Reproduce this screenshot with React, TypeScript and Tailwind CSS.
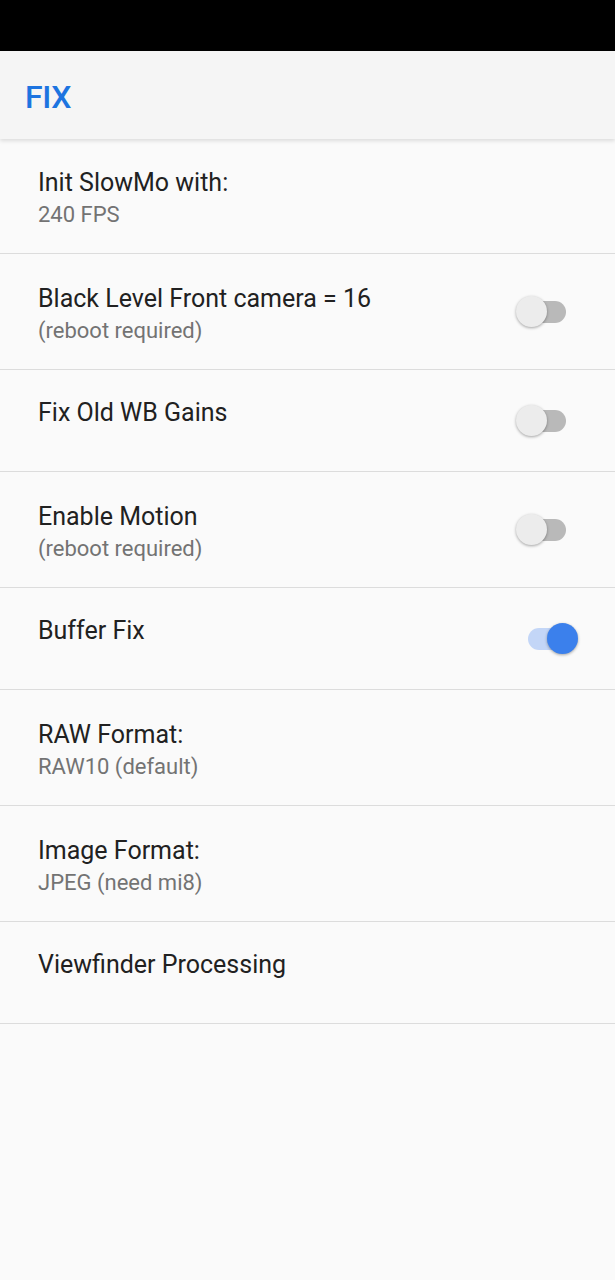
import React from 'react';

type Row = {
  title: string;
  summary?: string;
  toggle?: boolean;
};

const rows: Row[] = [
  { title: 'Init SlowMo with:', summary: '240 FPS' },
  { title: 'Black Level Front camera = 16', summary: '(reboot required)', toggle: false },
  { title: 'Fix Old WB Gains', toggle: false },
  { title: 'Enable Motion', summary: '(reboot required)', toggle: false },
  { title: 'Buffer Fix', toggle: true },
  { title: 'RAW Format:', summary: 'RAW10 (default)' },
  { title: 'Image Format:', summary: 'JPEG (need mi8)' },
  { title: 'Viewfinder Processing' },
];

function Switch({ on }: { on: boolean }) {
  return (
    <div className="relative w-[62px] h-[31px] shrink-0">
      <div
        className={
          on
            ? 'absolute left-[12px] top-[4.5px] w-[38px] h-[22px] rounded-full bg-[#c3d6f7]'
            : 'absolute left-[12px] top-[4.5px] w-[38px] h-[22px] rounded-full bg-[#b9b9b9]'
        }
      />
      <div
        className={
          on
            ? 'absolute left-[31px] top-0 w-[31px] h-[31px] rounded-full bg-[#3b80ec] shadow-[0_1px_3px_rgba(0,0,0,0.35)]'
            : 'absolute left-0 top-0 w-[31px] h-[31px] rounded-full bg-[#ececec] shadow-[0_1px_3px_rgba(0,0,0,0.35)]'
        }
      />
    </div>
  );
}

export default function App() {
  return (
    <div className="w-[615px] h-[1280px] bg-[#fafafa] font-['Roboto',sans-serif] overflow-hidden">
      {/* status bar */}
      <div className="h-[51px] bg-black" />

      {/* toolbar */}
      <div className="relative z-10 h-[88px] bg-[#f5f5f5] flex items-center pl-[25px] pt-[4px] shadow-[0_2px_4px_rgba(0,0,0,0.12)]">
        <span className="text-[32px] font-medium text-[#1d74e0] tracking-[-0.3px]">FIX</span>
      </div>

      {/* preference list */}
      <div className="flex flex-col">
        {rows.map((row, i) => (
          <div
            key={i}
            className={
              (row.summary ? (i === 0 ? 'h-[115px] pt-[6px]' : 'h-[116px] pt-[6px]') : 'h-[102px] pb-[15px]') +
              ' flex items-center justify-between pl-[38px] pr-[37px] border-b-[1.5px] border-[#dcdcdc]'
            }
          >
            <div className="flex flex-col">
              <span className="text-[25px] leading-[32px] text-[#212121]">{row.title}</span>
              {row.summary && (
                <span className="text-[22px] leading-[32px] text-[#737373]">{row.summary}</span>
              )}
            </div>
            {row.toggle !== undefined && (
              <div className={row.summary ? '-mt-[6px]' : 'mt-[15px]'}>
                <Switch on={row.toggle} />
              </div>
            )}
          </div>
        ))}
      </div>
    </div>
  );
}
